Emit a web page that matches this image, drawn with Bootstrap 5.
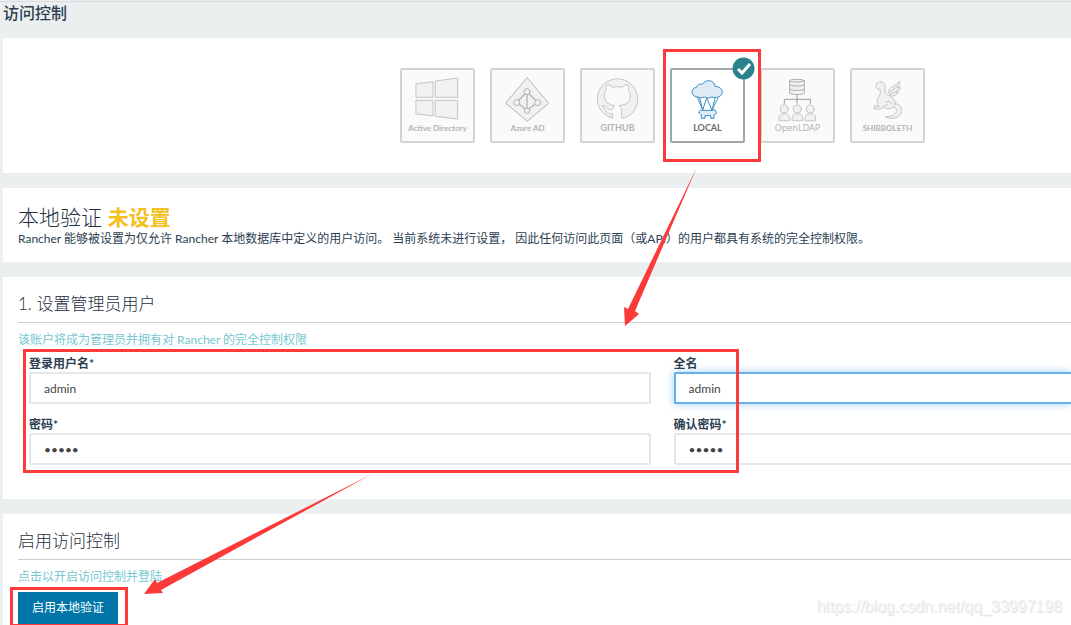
<!DOCTYPE html>
<html lang="zh-CN">
<head>
<meta charset="utf-8">
<meta name="viewport" content="width=device-width, initial-scale=1">
<title>访问控制</title>
<link href="https://cdn.jsdelivr.net/npm/bootstrap@5.3.0/dist/css/bootstrap.min.css" rel="stylesheet">
<style>
  body { background: #ebefef; color: #2c3e50; font: 12px/16px Lato, "Noto Sans CJK SC", sans-serif; overflow: hidden; }
  .console { padding-left: 3px; gap: 15px; }
  .page-title { font-size: 16px; line-height: 22px; font-weight: 500; padding-bottom: 14px; margin: 1px 0 -15px -3px; padding-left: 3px; border-top: 1px solid #d9dddd; }
  .panel { background: #fff; padding: 15px 0 15px 15px; }
  .panel-tiles { padding: 30px 0 30px 23.5%; gap: 15px; }
  .panel-title { font-size: 21px; line-height: 28px; font-weight: 300; color: #1f3042; }
  .panel-title strong { color: #f4c01a; font-weight: 700; }
  .section-title { font-size: 17px; line-height: 24px; font-weight: 300; color: #1f3042; padding-bottom: 6px; margin-bottom: 9px; border-bottom: 1px solid #cbcece; }
  .hint { color: #76c7cf; }
  .provider { width: 75px; height: 75px; border: 2px solid #d3d3d3; border-radius: 2px; background: #fafafa; color: #b4b4b4; font-size: 9px; font-weight: 700; line-height: 16px; white-space: nowrap; }
  .provider svg { width: 71px; height: 50px; overflow: visible; fill: #f1f1f1; stroke: #c4c4c4; stroke-width: 3; stroke-linejoin: round; stroke-linecap: round; }
  .provider.long-name { font-size: 8px; }
  .provider.open { font-family: "Noto Sans", sans-serif; font-weight: 400; }
  .provider.chosen { background: #fff; border-color: #a0a7ab; color: #6b6b6b; }
  .provider.chosen svg { fill: #dcebf5; stroke: #3c8dc5; }
  .provider .tick { top: -13px; right: -12px; width: 23px; height: 23px; }
  .provider .tick svg { width: 23px; height: 23px; fill: none; stroke: #fff; display: block; }
  .fields { grid-template-columns: 61fr 39fr; gap: 13px 23px; padding-left: 11px; margin-top: 8px; margin-bottom: 19px; }
  .fields label { font-weight: 700; display: block; }
  .field { height: 32px; border: 2px solid #e4e8e8; border-radius: 2px; padding: 0 13px; font-size: 12px; color: #444; box-shadow: none; }
  .field.active, .field:focus { border-color: #66afe9; box-shadow: 0 0 8px rgba(102, 175, 233, .6); }
  .btn-enable { background: #0075a8; color: #fff; border: 0; border-radius: 0; font-size: 12px; line-height: 16px; padding: 8px 14px; margin-top: 7px; }
  .marks { left: 0; top: 0; width: 1071px; height: 625px; pointer-events: none; }
  .watermark { right: 9px; bottom: 8px; font: 16px/20px "Liberation Sans", Arial, sans-serif; color: #f4f4f4; text-shadow: 1px 1px 1px #ddd; }
</style>
</head>
<body>
<main class="console d-flex flex-column min-vh-100">
  <h1 class="page-title">访问控制</h1>

  <section class="panel panel-tiles d-flex justify-content-center">
    <button type="button" class="provider long-name p-0 d-flex flex-column align-items-center">
      <svg viewBox="21 75 213 150"><path d="M64 116l50-6v47H64zM122 108l66-9v58h-66zM64 166h50v47l-50-6zM122 166h66v56l-66-8z"/></svg>
      <span>Active Directory</span>
    </button>
    <button type="button" class="provider long-name p-0 d-flex flex-column align-items-center">
      <svg viewBox="291 75 213 150"><path d="M397 99l64 76-64 54-64-54z" stroke="#b4b4b4"/><path d="M396 140l-31 32 31 24 32-24zM396 140v56" stroke="#b4b4b4" stroke-width="4"/><g stroke="#b4b4b4"><circle cx="396" cy="140" r="9"/><circle cx="365" cy="173" r="9"/><circle cx="428" cy="173" r="9"/><circle cx="396" cy="197" r="8"/></g></svg>
      <span>Azure AD</span>
    </button>
    <button type="button" class="provider p-0 d-flex flex-column align-items-center">
      <svg viewBox="561 75 213 150"><path d="M651 219c-27-9-44-30-44-57a60 60 0 0 1 121 0c0 27-16 48-41 57h-7v-24c0-6-3-10-8-13 22-2 34-12 34-30 0-7-2-12-6-16 2-6 1-12-1-17-7 0-13 3-18 8-9-3-19-3-28 0-5-5-11-8-18-8-2 5-3 11-1 17-4 4-6 9-6 16 0 18 12 28 32 30-4 3-6 6-7 11-12 4-16-3-20-7-3-4-7-5-11-4 8 8 9 18 18 22 4 3 8 3 12 2z"/></svg>
      <span>GITHUB</span>
    </button>
    <button type="button" class="provider chosen position-relative p-0 d-flex flex-column align-items-center">
      <svg viewBox="51 75 213 150"><path d="M128 159l15 36 12-36 16 36 18-36M143 195l-9-36M171 195l9-36" fill="none"/><path d="M127 156c-19 0-23-26-2-29 2-10 12-12 17-9 9-16 35-15 38 6 25 0 29 26 10 32-6 2-14 2-20 0-7 4-15 4-21 0-8 3-15 3-22 0z"/><path d="M132 202c0-5 3-6 8-6h33l5-3 6 8c0 5-3 8-7 9v10h-10v-8h-17v8h-11v-11c-4-1-4-4-7-7z"/></svg>
      <span>LOCAL</span>
      <span class="tick position-absolute"><svg viewBox="0 0 23 23"><circle cx="11.500" cy="11.500" r="11" fill="#2b818c" stroke="none"/><path d="M6 12l4 4 8-9" stroke-linecap="butt" stroke-linejoin="miter"/></svg></span>
    </button>
    <button type="button" class="provider open p-0 d-flex flex-column align-items-center">
      <svg viewBox="321 75 213 150"><path d="M404 107v37c0 6 44 6 44 0v-37M404 119c0 6 44 6 44 0M404 132c0 6 44 6 44 0" stroke="#adadad"/><ellipse cx="426" cy="107" rx="22" ry="4" stroke="#adadad"/><path d="M426 150v25M388 175v-12h78v12" fill="none" stroke="#9c9c9c"/><g id="person"><path d="M372 226c0-15 4-19 12-20h8c8 1 12 5 12 20z"/><circle cx="388" cy="192" r="12"/></g><use href="#person" x="39"/><use href="#person" x="78"/></svg>
      <span>OpenLDAP</span>
    </button>
    <button type="button" class="provider long-name p-0 d-flex flex-column align-items-center">
      <svg viewBox="591 75 213 150"><path d="M718 176c22-1 28 20 17 34-10 12-31 13-45 5 17 1 31-4 34-15 2-9-4-14-12-14z"/><path d="M700 138c4-14 22-14 34-29-1 9-2 15-6 20l8-2c-2 7-6 12-12 15l6 1c-6 8-14 11-22 10z"/><path d="M664 116c5-3 9-4 11-8l3 5 5-3c1 5 7 7 8 15 0 9-3 13-1 17 5 9 20 11 27 22 7 12 1 26-13 27-9 1-14-3-20-4-6 6-18 8-28 3 4-5 12-4 17-6-8-3-9-19 0-32 3-5 4-11 2-18-4 0-9-2-11-6z"/><path d="M684 187c4-6 8-8 14-7M694 172c8-6 15-3 15 5M704 141l24-17M706 147l22-9M656 183c3-4 8-2 8 2" fill="none"/></svg>
      <span>SHIBBOLETH</span>
    </button>
  </section>

  <section class="panel">
    <h2 class="panel-title m-0">本地验证 <strong>未设置</strong></h2>
    <p class="m-0">Rancher 能够被设置为仅允许 Rancher 本地数据库中定义的用户访问。 当前系统未进行设置， 因此任何访问此页面（或API）的用户都具有系统的完全控制权限。</p>
  </section>

  <section class="panel">
    <h2 class="section-title mt-0">1. 设置管理员用户</h2>
    <p class="hint m-0">该账户将成为管理员并拥有对 Rancher 的完全控制权限</p>
    <form class="fields d-grid">
      <div><label for="login">登录用户名*</label><input id="login" class="field form-control" type="text" value="admin"></div>
      <div><label for="fullname">全名</label><input id="fullname" class="field active form-control border-end-0 rounded-end-0" type="text" value="admin"></div>
      <div><label for="password">密码*</label><input id="password" class="field form-control" type="password" value="admin"></div>
      <div><label for="confirm">确认密码*</label><input id="confirm" class="field form-control border-end-0 rounded-end-0" type="password" value="admin"></div>
    </form>
  </section>

  <section class="panel flex-grow-1 pb-0">
    <h2 class="section-title mt-0">启用访问控制</h2>
    <p class="hint m-0">点击以开启访问控制并登陆</p>
    <button type="button" class="btn btn-enable">启用本地验证</button>
  </section>
</main>

<svg class="marks position-absolute" viewBox="0 0 1071 625" fill="none" stroke="#fc3a3a" stroke-width="3">
  <path d="M664.500 50.500h95v110h-95zM24.500 350.500h713v121h-713zM11.500 588.500h115v37h-115z"/>
  <path d="M697 167L635 311l4 3-14 12-1-19 4 2zM372 474L161 590l2 3-19 1 11-15 2 4z" fill="#fc3a3a" stroke="none"/>
</svg>
<div class="watermark position-absolute">https://blog.csdn.net/qq_33997198</div>
<script src="https://cdn.jsdelivr.net/npm/bootstrap@5.3.0/dist/js/bootstrap.bundle.min.js"></script>
</body>
</html>
